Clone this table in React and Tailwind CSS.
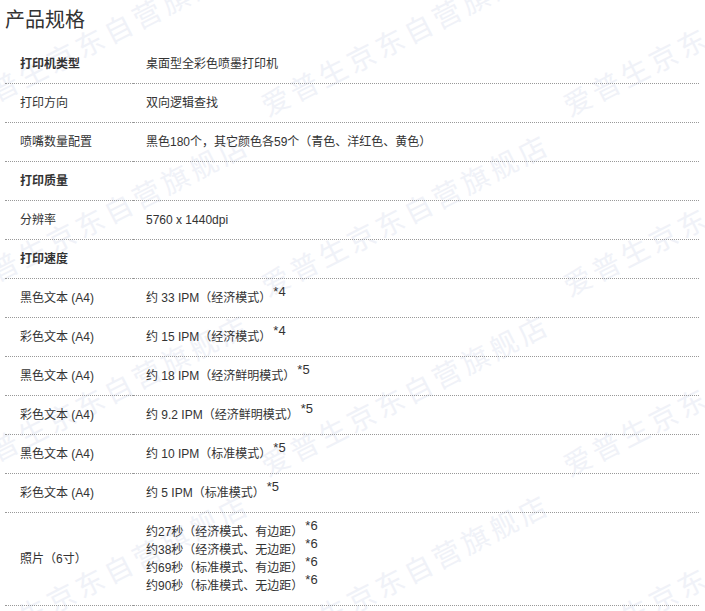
import React from "react";

const FONT = { fontFamily: '"Liberation Sans", "Noto Sans CJK SC", sans-serif' };

const rows = [
  { k: "打印机类型", b: true, v: "桌面型全彩色喷墨打印机" },
  { k: "打印方向", v: "双向逻辑查找" },
  { k: "喷嘴数量配置", v: "黑色180个，其它颜色各59个（青色、洋红色、黄色）" },
  { k: "打印质量", b: true, v: "" },
  { k: "分辨率", v: "5760 x 1440dpi" },
  { k: "打印速度", b: true, v: "" },
  { k: "黑色文本 (A4)", v: "约 33 IPM（经济模式）", s: "*4" },
  { k: "彩色文本 (A4)", v: "约 15 IPM（经济模式）", s: "*4" },
  { k: "黑色文本 (A4)", v: "约 18 IPM（经济鲜明模式）", s: "*5" },
  { k: "彩色文本 (A4)", v: "约 9.2 IPM（经济鲜明模式）", s: "*5" },
  { k: "黑色文本 (A4)", v: "约 10 IPM（标准模式）", s: "*5" },
  { k: "彩色文本 (A4)", v: "约 5 IPM（标准模式）", s: "*5" },
];

const photo = [
  "约27秒（经济模式、有边距）",
  "约38秒（经济模式、无边距）",
  "约69秒（标准模式、有边距）",
  "约90秒（标准模式、无边距）",
];

const marks = [];
[100, 280, 460, 640].forEach((y) => {
  [-25, 275, 577].forEach((x) => marks.push({ x, y }));
});

function Sup({ children }) {
  return <span className="relative -top-[6px] ml-[2px] text-[13px]">{children}</span>;
}

export default function App() {
  return (
    <div className="relative w-[705px] h-[611px] overflow-hidden bg-white text-[#333] text-[12px]" style={FONT}>
      <div className="absolute inset-0 pointer-events-none">
        {marks.map((m, i) => (
          <span
            key={i}
            className="absolute whitespace-nowrap origin-[14px_50%] -rotate-[27deg] text-[28px] leading-[32px] tracking-[4px] font-normal text-[#f0f2f8]"
            style={{ left: m.x - 14, top: m.y - 16, fontFamily: '"Noto Sans CJK SC", sans-serif' }}
          >
            爱普生京东自营旗舰店
          </span>
        ))}
      </div>
      <div className="relative">
        <div className="h-[45px] pl-[5px] pt-[6px]">
          <h2 className="text-[20px] leading-[28px] font-normal text-[#333]">产品规格</h2>
        </div>
        <div className="ml-[5px] w-[694px]">
          {rows.map((r, i) => (
            <div key={i} className="grid grid-cols-[128px_1fr]">
              <div className={"h-[39px] flex items-center pl-[15px] border-b border-dotted border-[#999]" + (r.b ? " font-bold" : "")}>
                {r.k}
              </div>
              <div className="h-[39px] flex items-center pl-[13px] border-b border-dotted border-[#999]">
                <span>
                  {r.v}
                  {r.s ? <Sup>{r.s}</Sup> : null}
                </span>
              </div>
            </div>
          ))}
          <div className="grid grid-cols-[128px_1fr]">
            <div className="h-[93px] flex items-center pl-[15px] border-b border-dotted border-[#999]">照片（6寸）</div>
            <div className="h-[93px] flex flex-col justify-center pl-[13px] border-b border-dotted border-[#999] leading-[18px]">
              {photo.map((p, i) => (
                <div key={i}>
                  {p}
                  <Sup>*6</Sup>
                </div>
              ))}
            </div>
          </div>
        </div>
      </div>
    </div>
  );
}
